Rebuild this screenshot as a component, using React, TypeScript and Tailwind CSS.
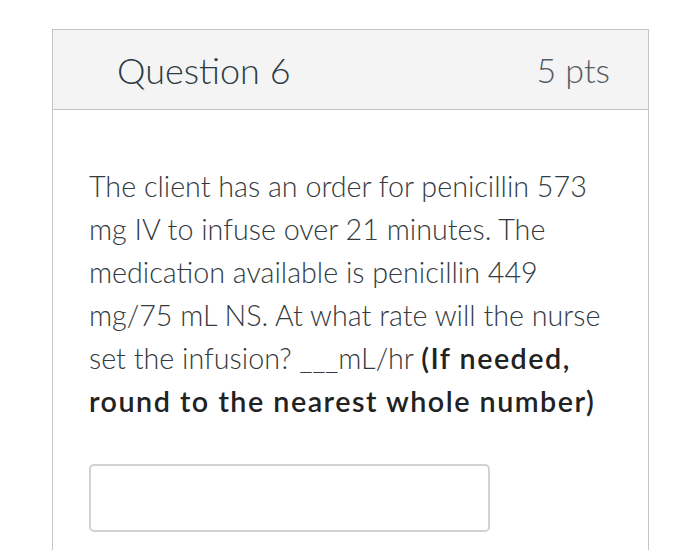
import React from "react";

export default function App() {
  return (
    <div className="w-[700px] h-[550px] bg-white overflow-hidden" style={{ fontFamily: "Lato, 'Noto Sans', sans-serif" }}>
      <div className="ml-[52px] mt-[29px] w-[597px] border border-[#c4c4c4] border-b-0 h-[540px]">
        <div className="h-[80px] bg-[#f4f4f4] border-b border-[#c4c4c4] flex items-center justify-between pl-[64px] pr-[38px]">
          <span className="text-[36px] font-light text-[#2d3b45] leading-none">Question 6</span>
          <span className="text-[34px] font-light text-[#555c63] leading-none">5 pts</span>
        </div>
        <div className="pl-[36px] pr-[38px] pt-[55px]">
          <p className="text-[28.7px] font-light leading-[43px] text-[#333a40]">
            The client has an order for penicillin 573 mg IV to infuse over 21 minutes. The medication available is penicillin 449 mg/75 mL NS. At what rate will the nurse set the infusion? ___mL/hr <strong className="font-semibold tracking-[1.5px] text-[#222222]">(If needed, round to the nearest whole number)</strong>
          </p>
          <div className="mt-[41px] w-[401px] h-[68px] border-2 border-[#d2d2d2] rounded-[5px]"></div>
        </div>
      </div>
    </div>
  );
}
